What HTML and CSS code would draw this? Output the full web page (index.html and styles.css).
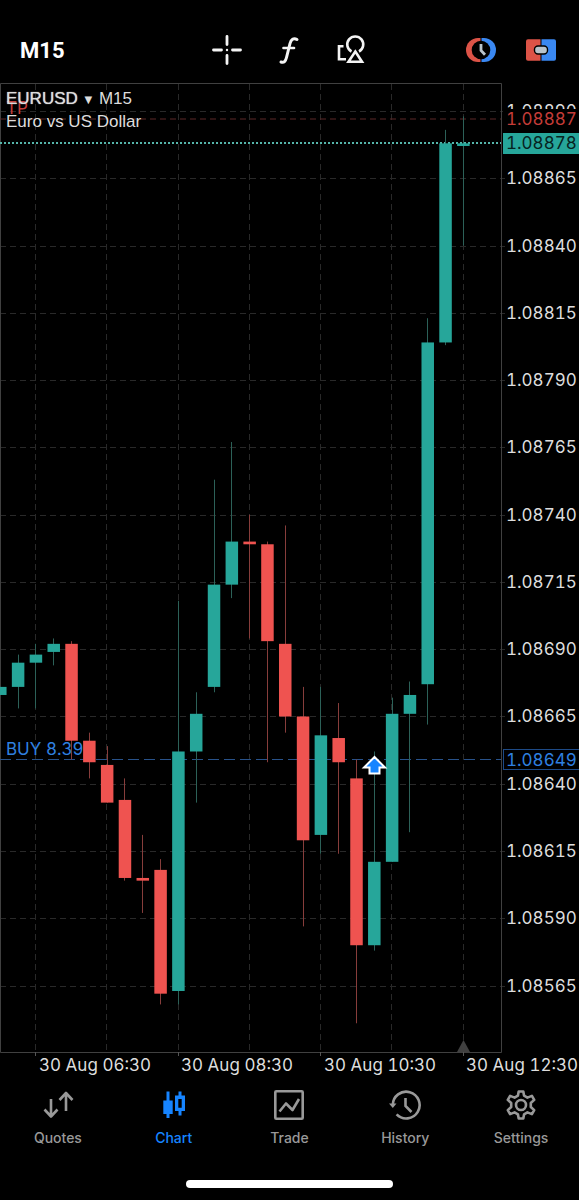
FILE: index.html
```html
<!DOCTYPE html>
<html lang="en">
<head>
    <meta charset="UTF-8">
    <meta name="viewport" content="width=device-width, initial-scale=1.0">
    <title>EURUSD M15</title>
    <link rel="stylesheet" href="styles.css">
</head>
<body>
    <header class="toolbar">
        <button class="timeframe">M15</button>
        <div class="tools">
            <button class="icon-button" aria-label="Crosshair">
                <svg width="32" height="32" viewBox="0 0 32 32" fill="none" stroke="#f4f4f4" stroke-width="2.8" stroke-linecap="round">
                    <path d="M16 2.5v8M16 21.5v8M2.5 16h8M21.5 16h8"/>
                    <circle cx="16" cy="16" r="1.2" fill="#f4f4f4" stroke="none"/>
                </svg>
            </button>
            <button class="icon-button" aria-label="Indicators">
                <svg width="32" height="32" viewBox="0 0 32 32" fill="none" stroke="#f4f4f4" stroke-width="3" stroke-linecap="round" stroke-linejoin="round">
                    <path d="M24 5.5c-3.500-2-6 0-7 4l-3.500 14c-1 4-2.500 5.500-5.500 4.500"/>
                    <path d="M10.500 14h10.500" stroke-width="2.600"/>
                </svg>
            </button>
            <button class="icon-button" aria-label="Objects">
                <svg width="32" height="32" viewBox="0 0 32 32" fill="none" stroke="#f4f4f4" stroke-width="2.600">
                    <path d="M8.500 12.300H4v13h7"/>
                    <path d="M16.500 17.500a8 8 0 1 1 7.500 0"/>
                    <path d="M20.300 17.500L27 27.800H13.500z"/>
                </svg>
            </button>
        </div>
        <div class="actions">
            <button class="icon-button" aria-label="Trading sessions">
                <svg width="32" height="32" viewBox="0 0 32 32">
                    <path d="M15.500 4H13a12 12 0 0 0 0 24h2.500z" fill="#dc5347"/>
                    <path d="M16.500 4H19a12 12 0 0 1 0 24h-2.500z" fill="#3a88f2"/>
                    <circle cx="16" cy="16" r="9.300" fill="#000"/>
                    <path d="M16 10v6.500l4 4.200" fill="none" stroke="#b9c4cc" stroke-width="2.800"/>
                </svg>
            </button>
            <button class="icon-button" aria-label="New order">
                <svg width="32" height="32" viewBox="0 0 32 32">
                    <path d="M15.500 5.300H3a2 2 0 0 0-2 2v17.400a2 2 0 0 0 2 2h12.500z" fill="#dc5347"/>
                    <path d="M16.500 5.300H29a2 2 0 0 1 2 2v17.400a2 2 0 0 1-2 2H16.500z" fill="#3a88f2"/>
                    <rect x="9.500" y="12" width="13" height="8" rx="3.500" fill="#b9c4cc" stroke="#000" stroke-width="1.400"/>
                </svg>
            </button>
        </div>
    </header>

    <main class="chart-area">
        <svg class="chart" viewBox="0 0 579 996" role="img" aria-label="EURUSD candlestick chart">
            <g id="grid" class="grid"></g>
            <path class="frame" d="M0.500 970.500V1.500H501.500V970.500z"/>
            <path class="frame-tick" d="M35.500 970v4M178.500 970v4M320.500 970v4M463.500 970v4"/>
            <path class="marker" d="M463.500 958l6.500 12h-13z"/>

            <path class="line-tp" d="M0 37H501"/>
            <path class="line-bid" d="M0 61H501"/>
            <path class="line-buy" d="M0 677.500H501"/>
            <g id="candles"></g>
            <text class="order-text tp" x="6" y="32">TP</text>
            <text class="order-text buy" x="6" y="673">BUY 8.39</text>
            <path class="entry" d="M374.500 675l-10.500 10.500h5.500v6h10v-6h5.500z"/>

            <g id="prices" class="axis-text"></g>
            <rect class="tag-mask" x="503" y="27" width="76" height="20"/>
            <text class="tag tp" x="506" y="43">1.08887</text>
            <rect class="tag-bid" x="503" y="51" width="76" height="21"/>
            <text class="tag bid" x="506" y="67">1.08878</text>
            <rect class="tag-buy" x="503.500" y="667.500" width="78" height="20"/>
            <text class="tag buy" x="506" y="684">1.08649</text>

            <g class="axis-text">
                <text x="39" y="989">30 Aug 06:30</text>
                <text x="181" y="989">30 Aug 08:30</text>
                <text x="324" y="989">30 Aug 10:30</text>
                <text x="466" y="989">30 Aug 12:30</text>
            </g>
        </svg>
        <div class="symbol">
            <div><span class="symbol-name">EURUSD</span> <span class="caret">▼</span> M15</div>
            <div>Euro vs US Dollar</div>
        </div>
    </main>

    <nav class="tabs">
        <a class="tab" href="#quotes">
            <svg width="32" height="32" viewBox="0 0 32 32" fill="none" stroke="currentColor" stroke-width="2.600" stroke-linejoin="round">
                <path d="M9 10v17M2.500 20.500L9 27.500l6.500-7M24 22V4M17.500 11L24 4l6.500 7"/>
            </svg>
            Quotes
        </a>
        <a class="tab active" href="#chart">
            <svg width="32" height="32" viewBox="0 0 32 32" fill="currentColor">
                <path d="M8.500 2.500h3v9h3.200v13.500h-3.200v4h-3v-4H5.300V11.500h3.200z"/>
                <path fill-rule="evenodd" d="M20.500 2.500h3v4h3.500v15.500h-3.500v4.500h-3v-4.500H17V6.500h3.500zM20.300 10v8.800h3.400V10z"/>
            </svg>
            Chart
        </a>
        <a class="tab" href="#trade">
            <svg width="32" height="32" viewBox="0 0 32 32" fill="none" stroke="currentColor" stroke-width="2.600" stroke-linejoin="round">
                <rect x="2.300" y="2.300" width="27.400" height="27.400" rx="1"/>
                <path d="M6.500 22.500l6.500-8 6.500 6.500L26 10"/>
            </svg>
            Trade
        </a>
        <a class="tab" href="#history">
            <svg width="32" height="32" viewBox="0 0 32 32" fill="none" stroke="currentColor" stroke-width="2.600">
                <path d="M3.800 16a13.400 13.400 0 1 1 3.800 9.400"/>
                <path d="M0 14.500h7.500L3.800 19z" fill="currentColor" stroke="none"/>
                <path d="M16.500 9v8l6 6"/>
            </svg>
            History
        </a>
        <a class="tab" href="#settings">
            <svg width="32" height="32" viewBox="0 0 32 32" fill="none" stroke="currentColor" stroke-width="2.600" stroke-linejoin="round">
                <path d="M13.700 2.500h4.600l.8 4.200 3.300 1.900 4.500-1.700 2.300 4-3.400 3.100v4l3.400 3.100-2.300 4-4.500-1.700-3.300 1.900-.8 4.200h-4.600l-.8-4.200-3.300-1.900-4.500 1.700-2.300-4L6.200 18v-4l-3.400-3.100 2.300-4 4.500 1.700 3.300-1.900z"/>
                <circle cx="16" cy="16" r="5"/>
            </svg>
            Settings
        </a>
    </nav>
    <div class="home-indicator"></div>

    <script src="chart.js"></script>
</body>
</html>
```
FILE: styles.css
```css
body {
    margin: 0;
    background-color: #000;
    color: #ddd;
    font-family: Inter, Roboto, sans-serif;
}
button {
    padding: 0;
    border: none;
    background: none;
    color: inherit;
    cursor: pointer;
}
.toolbar {
    display: grid;
    grid-template-columns: 1fr auto 1fr;
    align-items: center;
    height: 64px;
    padding: 18px 22px 0 20px;
}
.timeframe {
    justify-self: start;
    font-family: Roboto, sans-serif;
    font-size: 22px;
    font-weight: bold;
    color: #fff;
}
.tools {
    display: flex;
    gap: 30px;
}
.actions {
    display: flex;
    justify-self: end;
    gap: 28px;
}
.icon-button {
    display: flex;
    width: 32px;
    height: 32px;
}
.chart-area {
    position: relative;
}
.chart {
    display: block;
    width: 100%;
    height: auto;
}
/* symbol name lies over the chart */
.symbol {
    position: absolute;
    top: 6px;
    left: 6px;
    font-family: "Liberation Sans", Arial, sans-serif;
    font-size: 17px;
    line-height: 22px;
}
.symbol-name {
    text-shadow: 0 0 1px #ddd;
}
.caret {
    margin: 0 2px;
    font-family: "DejaVu Sans", sans-serif;
    font-size: 10px;
    vertical-align: 1px;
}
.grid {
    stroke: #292929;
    stroke-dasharray: 6 4;
}
.frame {
    fill: none;
    stroke: #404040;
}
.frame-tick {
    stroke: #555;
}
.marker {
    fill: #404040;
}
.line-tp {
    stroke: #5c2828;
    stroke-dasharray: 6 4;
}
.line-bid {
    stroke: #55b5aa;
    stroke-width: 2;
    stroke-dasharray: 2 2;
}
.line-buy {
    stroke: #28528a;
    stroke-dasharray: 11 5;
}
.candle-up {
    fill: #26a69a;
}
.candle-down {
    fill: #ef5350;
}
.wick-up {
    stroke: #2c6158;
}
.wick-down {
    stroke: #873d3b;
}
.entry {
    fill: #1684ff;
    stroke: #fff;
    stroke-width: 2;
}
.axis-text,
.tag,
.order-text {
    font-size: 17px;
    font-variant-numeric: tabular-nums;
    fill: #ddd;
}
.order-text.tp,
.tag.tp {
    fill: #c43c38;
}
.order-text.buy,
.tag.buy {
    fill: #2f80e0;
}
.tag.bid {
    fill: #06231f;
}
.tag-mask {
    fill: #000;
}
.tag-bid {
    fill: #26a69a;
}
.tag-buy {
    fill: #000;
    stroke: #1d4a86;
}
.tabs {
    display: grid;
    grid-template-columns: repeat(5, 1fr);
    padding-top: 11px;
}
.tab {
    display: flex;
    flex-direction: column;
    align-items: center;
    gap: 8px;
    color: #999;
    font-size: 14px;
    font-weight: 500;
    line-height: 18px;
    text-decoration: none;
}
.tab.active {
    color: #1684ff;
}
.home-indicator {
    width: 207px;
    height: 8px;
    margin: 33px auto 12px;
    border-radius: 4px;
    background-color: #fff;
}
```
FILE: chart.js
```javascript
// [open, high, low, close] in points, 8665 = 1.08665
const candles = [
    [8673, 8676, 8673, 8676],
    [8676, 8688, 8668, 8685],
    [8685, 8692, 8668, 8688],
    [8689, 8694, 8684, 8692],
    [8692, 8693, 8649, 8656],
    [8656, 8659, 8642, 8648],
    [8647, 8654, 8633, 8633],
    [8634, 8642, 8604, 8605],
    [8605, 8621, 8592, 8604],
    [8608, 8612, 8558, 8562],
    [8563, 8708, 8558, 8652],
    [8652, 8674, 8633, 8666],
    [8676, 8753, 8674, 8714],
    [8714, 8767, 8709, 8730],
    [8730, 8740, 8694, 8729],
    [8729, 8730, 8648, 8693],
    [8692, 8736, 8659, 8665],
    [8665, 8676, 8587, 8619],
    [8621, 8676, 8614, 8658],
    [8657, 8670, 8614, 8648],
    [8642, 8649, 8551, 8580],
    [8580, 8652, 8578, 8611],
    [8611, 8672, 8611, 8666],
    [8666, 8678, 8622, 8673],
    [8677, 8813, 8662, 8804],
    [8804, 8883, 8803, 8878],
    [8877, 8888, 8840, 8878]
];

const step = 17.81;
const bodyWidth = 12.5;

function priceToY(price) {
    return 96.3 + (8865 - price) * 2.691;
}

function add(parent, tag, attrs) {
    const el = document.createElementNS('http://www.w3.org/2000/svg', tag);
    for (const name in attrs) {
        el.setAttribute(name, attrs[name]);
    }
    document.getElementById(parent).appendChild(el);
    return el;
}

// Grid lines and price labels
for (let price = 8890; price >= 8565; price -= 25) {
    const y = Math.round(priceToY(price)) + 0.5;
    add('grid', 'path', { d: `M0 ${y}H505` });
    add('prices', 'text', { x: 506, y: y + 5.5 }).textContent = `1.0${price}`;
}
for (let i = 2; i < candles.length; i += 4) {
    const x = Math.round(i * step - 0.5) + 0.5;
    add('grid', 'path', { d: `M${x} 2V970` });
}

candles.forEach(([open, high, low, close], i) => {
    const dir = close >= open ? 'up' : 'down';
    const x = i * step + 0.3;
    const wickX = Math.floor(x) + 0.5;
    const top = priceToY(Math.max(open, close));
    const bottom = priceToY(Math.min(open, close));
    add('candles', 'path', { class: `wick-${dir}`, d: `M${wickX} ${priceToY(high)}V${priceToY(low)}` });
    add('candles', 'rect', { class: `candle-${dir}`, x: x - bodyWidth / 2, y: top, width: bodyWidth, height: bottom - top });
});
```
